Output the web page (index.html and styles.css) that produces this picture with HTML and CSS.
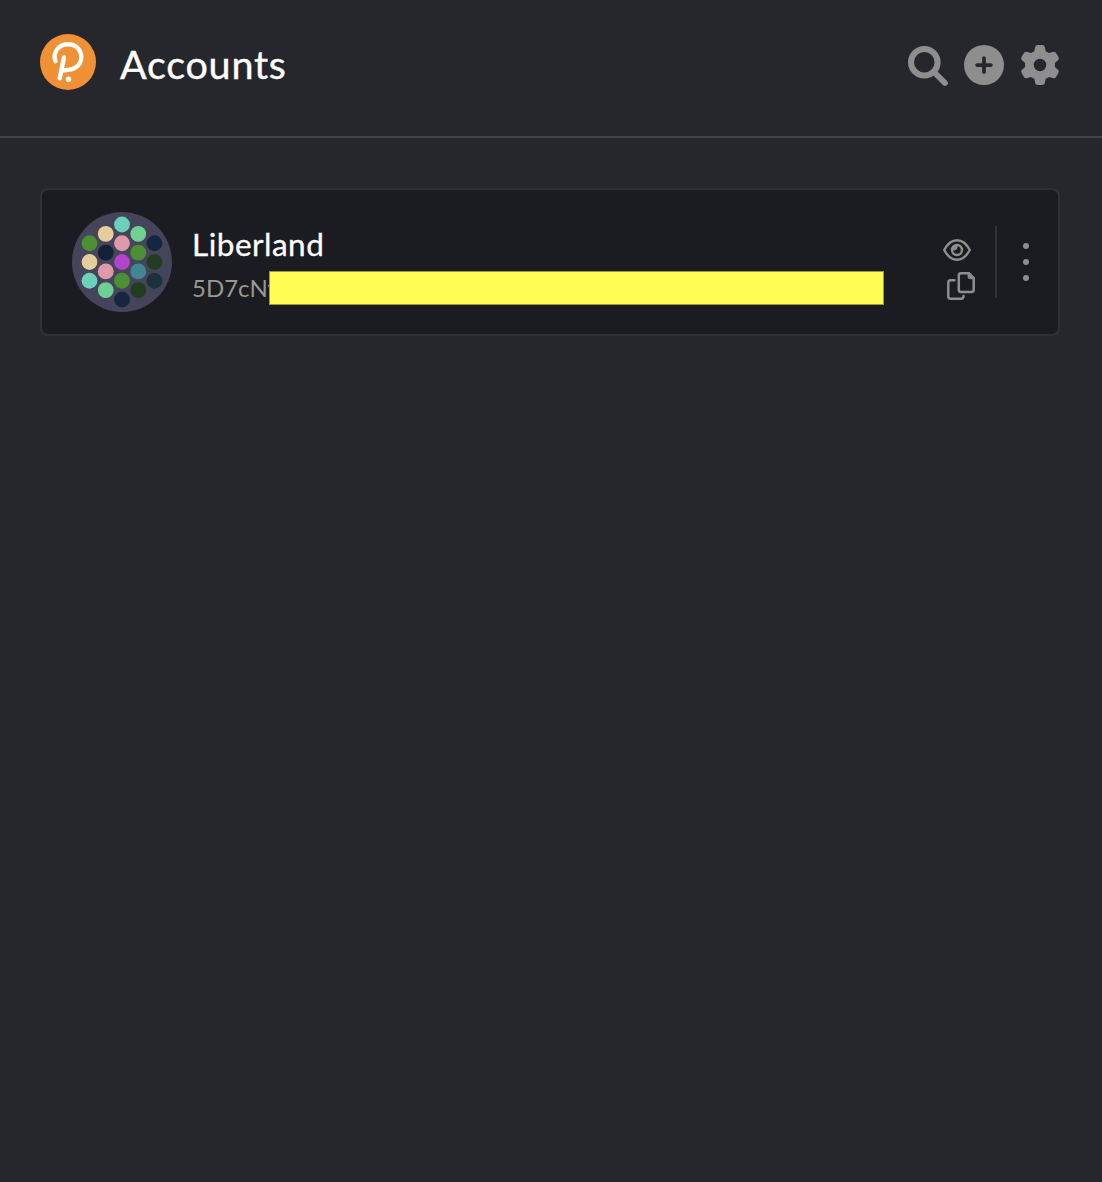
FILE: index.html
```html
<!DOCTYPE html>
<html lang="en">
<head>
<meta charset="utf-8">
<title>Accounts</title>
<link rel="stylesheet" href="styles.css">
</head>
<body>
<header class="header">
  <svg class="logo" viewBox="0 0 56 56">
    <circle cx="28" cy="28" r="28" fill="#f19135"/>
    <g fill="none" stroke="#fff" stroke-width="4.4" stroke-linecap="round">
      <path d="M15.400 27.200C12.500 18 19 10.200 28 10.200C36 10.200 41.300 16 41.300 23C41.300 31 35 36.800 22.500 36.200"/>
      <path d="M24 23.500L19.700 44.300"/>
    </g>
    <circle cx="28.500" cy="45.200" r="2.700" fill="#fff"/>
  </svg>
  <h1 class="title">Accounts</h1>
  <nav class="actions">
    <svg class="action" viewBox="0 0 40 40" fill="none" stroke="currentColor">
      <circle cx="16.300" cy="17.300" r="13.300" stroke-width="6"/>
      <path d="M26 27L37 38" stroke-width="5.800" stroke-linecap="round"/>
    </svg>
    <svg class="action" viewBox="0 0 512 512">
      <path fill="currentColor" d="M256 512A256 256 0 1 0 256 0a256 256 0 1 0 0 512zM232 344V280H168c-13.300 0-24-10.700-24-24s10.700-24 24-24h64V168c0-13.300 10.700-24 24-24s24 10.700 24 24v64h64c13.300 0 24 10.700 24 24s-10.700 24-24 24H280v64c0 13.300-10.700 24-24 24s-24-10.700-24-24z"/>
    </svg>
    <svg class="action" viewBox="0 0 512 512">
      <path fill="currentColor" d="M495.900 166.600c3.200 8.700 .5 18.400-6.400 24.600l-43.300 39.400c1.100 8.300 1.700 16.800 1.700 25.400s-.6 17.100-1.700 25.400l43.300 39.400c6.900 6.200 9.600 15.900 6.400 24.600c-4.400 11.900-9.700 23.300-15.800 34.300l-4.700 8.100c-6.600 11-14 21.400-22.100 31.200c-5.900 7.200-15.700 9.600-24.500 6.800l-55.700-17.700c-13.400 10.300-28.200 18.900-44 25.400l-12.500 57.100c-2 9.100-9 16.300-18.200 17.800c-13.800 2.300-28 3.500-42.500 3.500s-28.700-1.200-42.500-3.500c-9.200-1.500-16.200-8.700-18.200-17.800l-12.500-57.100c-15.800-6.500-30.600-15.100-44-25.400L83.100 425.900c-8.800 2.800-18.600 .3-24.500-6.800c-8.100-9.800-15.500-20.200-22.100-31.200l-4.700-8.100c-6.100-11-11.400-22.400-15.800-34.300c-3.200-8.700-.5-18.400 6.400-24.600l43.300-39.400C64.600 273.100 64 264.600 64 256s.6-17.100 1.700-25.400L22.400 191.200c-6.900-6.200-9.600-15.900-6.400-24.600c4.400-11.900 9.700-23.300 15.800-34.300l4.700-8.100c6.600-11 14-21.400 22.100-31.200c5.900-7.200 15.700-9.600 24.500-6.800l55.700 17.700c13.400-10.300 28.200-18.900 44-25.400l12.500-57.100c2-9.100 9-16.300 18.200-17.800C227.300 1.200 241.500 0 256 0s28.700 1.200 42.500 3.500c9.200 1.500 16.200 8.700 18.200 17.800l12.500 57.100c15.800 6.500 30.600 15.100 44 25.400l55.700-17.700c8.800-2.800 18.600-.3 24.500 6.800c8.100 9.800 15.500 20.200 22.100 31.200l4.700 8.100c6.100 11 11.400 22.400 15.800 34.300zM256 336a80 80 0 1 0 0-160 80 80 0 1 0 0 160z"/>
    </svg>
  </nav>
</header>
<main class="content">
  <article class="account">
    <svg class="identicon" viewBox="0 0 100 100">
      <circle cx="50" cy="50" r="50" fill="#45445a"/>
      <g fill="#6dd0b9"><circle cx="50" cy="12.500" r="7.900"/><circle cx="17.500" cy="68.750" r="7.900"/></g>
      <g fill="#e6cd9c"><circle cx="33.750" cy="21.900" r="7.900"/><circle cx="17.500" cy="50" r="7.900"/></g>
      <g fill="#6ed092"><circle cx="66.250" cy="21.900" r="7.900"/><circle cx="33.750" cy="78.100" r="7.900"/></g>
      <g fill="#df9aa9"><circle cx="50" cy="31.250" r="7.900"/><circle cx="33.750" cy="59.400" r="7.900"/></g>
      <g fill="#4c9034"><circle cx="17.500" cy="31.250" r="7.900"/><circle cx="66.250" cy="40.600" r="7.900"/><circle cx="50" cy="68.750" r="7.900"/></g>
      <g fill="#152740"><circle cx="82.500" cy="31.250" r="7.900"/><circle cx="50" cy="87.500" r="7.900"/></g>
      <circle cx="33.750" cy="40.600" r="7.900" fill="#12203a"/>
      <circle cx="50" cy="50" r="7.900" fill="#b342cc"/>
      <circle cx="66.250" cy="59.400" r="7.900" fill="#438693"/>
      <g fill="#203d20"><circle cx="82.500" cy="50" r="7.900"/><circle cx="66.250" cy="78.100" r="7.900"/></g>
      <circle cx="82.500" cy="68.750" r="7.900" fill="#19323e"/>
    </svg>
    <div class="info">
      <h2 class="name">Liberland</h2>
      <div class="address"><span class="address-text">5D7cNv</span><span class="mask"></span></div>
    </div>
    <div class="tools">
      <svg class="eye" viewBox="0 0 28 22" fill="none" stroke="currentColor">
        <path d="M1.200 11C4.300 5.200 8.700 1.200 14 1.200S23.700 5.200 26.800 11C23.700 16.800 19.300 20.800 14 20.800S4.300 16.800 1.200 11Z" stroke-width="2.400" stroke-linejoin="round"/>
        <circle cx="14" cy="11" r="5" stroke-width="2.400"/>
        <path d="M9.500 10.500A4.700 4.700 0 0 1 14 6.400V8.500A2.800 2.800 0 0 1 11.500 11Z" fill="currentColor" stroke-width="1"/>
      </svg>
      <svg class="copy" viewBox="0 0 28 28" fill="none" stroke="currentColor" stroke-width="2.500" stroke-linecap="round">
        <path d="M7.500 8.200H3.500Q1.300 8.200 1.300 10.500V24.500Q1.300 26.700 3.500 26.700H14Q16.500 26.700 16.500 23.900"/>
        <path d="M14 1.300H22L26.700 6V17.700Q26.700 20 24.500 20H14Q11.800 20 11.800 17.700V3.500Q11.800 1.300 14 1.300Z"/>
        <path d="M21 1V5Q21 6.800 23 6.800H27L22 1Z" fill="currentColor" stroke-width=".8"/>
      </svg>
    </div>
    <div class="menu">
      <svg class="dots" viewBox="0 0 6 38" fill="currentColor"><circle cx="3" cy="3" r="3"/><circle cx="3" cy="19" r="3"/><circle cx="3" cy="35" r="3"/></svg>
    </div>
  </article>
</main>
</body>
</html>
```
FILE: styles.css
```css
* { box-sizing: border-box; }
body {
  margin: 0;
  min-height: 100vh;
  background: #26272c;
  color: #fff;
  font-family: Lato, "Open Sans", sans-serif;
}
svg { display: block; flex: none; }
.header {
  display: flex;
  align-items: flex-start;
  height: 138px;
  padding: 34px 42px 0 40px;
  border-bottom: 2px solid #44454a;
}
.logo { width: 56px; height: 56px; }
.title {
  margin: 6px 0 0 24px;
  font-size: 39.5px;
  font-weight: 400;
  line-height: 48px;
  letter-spacing: 0.75px;
  -webkit-text-stroke: 0.4px currentColor;
}
.actions {
  display: flex;
  gap: 16px;
  margin: 11px 0 0 auto;
  color: #8e8e8e;
}
.action { width: 40px; height: 40px; overflow: visible; }
.content { padding: 50px 42px 0 40px; }
.account {
  display: flex;
  align-items: center;
  height: 148px;
  padding-left: 30px;
  border: 2px solid #303132;
  border-radius: 8px;
  background: #1b1c21;
  color: #8e8e8e;
}
.identicon { width: 100px; height: 100px; }
.info { flex: 1; margin-left: 20px; padding-top: 4px; }
.name {
  margin: 0;
  color: #fff;
  font-size: 31.5px;
  font-weight: 400;
  line-height: 41px;
  letter-spacing: 0.5px;
  -webkit-text-stroke: 0.3px currentColor;
}
.address {
  display: flex;
  align-items: center;
  height: 34px;
  margin-top: 6px;
  font-size: 24px;
  line-height: 34px;
  color: #9a9893;
}
.address-text { width: 77px; white-space: nowrap; }
.mask {
  z-index: 1;
  width: 615px;
  height: 34px;
  border: 1px solid #9b993d;
  background: #fffd54;
}
.tools {
  display: flex;
  flex-direction: column;
  gap: 11px;
  width: 52px;
  padding-top: 15px;
  height: 76px;
}
.eye { width: 28px; height: 22px; }
.copy { width: 28px; height: 28px; margin-left: 4px; }
.menu {
  display: flex;
  align-items: center;
  width: 63px;
  height: 72px;
  padding-left: 26px;
  border-left: 2px solid #303132;
}
.dots { width: 6px; height: 38px; }
```
